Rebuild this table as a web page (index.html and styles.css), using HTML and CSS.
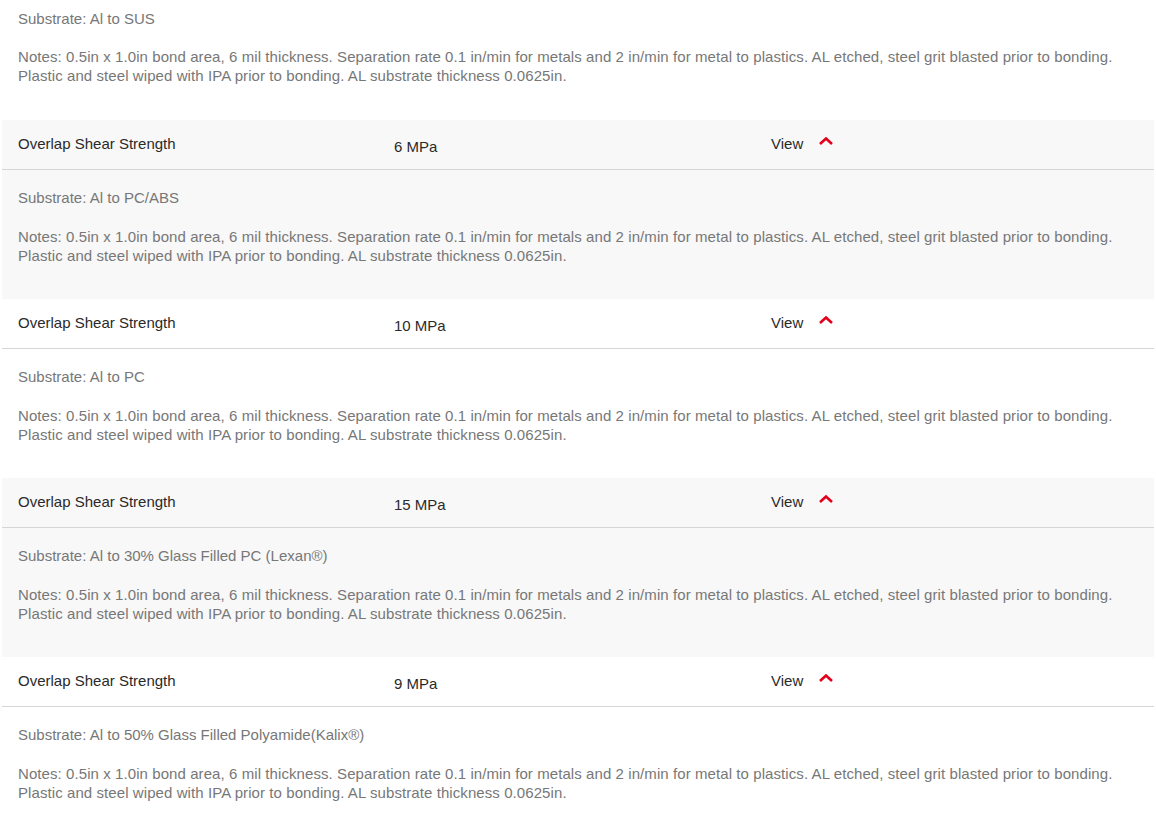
FILE: index.html
```html
<!DOCTYPE html>
<html>
<head>
<meta charset="utf-8">
<link rel="stylesheet" href="styles.css">
</head>
<body>
<div class="list">
  <section class="block">
    <div class="detail detail--cut">
      <p class="sub">Substrate: Al to SUS</p>
      <p class="notes">Notes: 0.5in x 1.0in bond area, 6 mil thickness. Separation rate 0.1 in/min for metals and 2 in/min for metal to plastics. AL etched, steel grit blasted prior to bonding. Plastic and steel wiped with IPA prior to bonding. AL substrate thickness 0.0625in.</p>
    </div>
  </section>
  <section class="block block--grey">
    <div class="row">
      <span class="label">Overlap Shear Strength</span>
      <span class="value">6 MPa</span>
      <span class="view">View <svg class="chev" width="14" height="8" viewBox="0 0 14 8"><polyline points="1,7 7,1.5 13,7" fill="none" stroke="#e2001a" stroke-width="2.6"/></svg></span>
    </div>
    <div class="detail">
      <p class="sub">Substrate: Al to PC/ABS</p>
      <p class="notes">Notes: 0.5in x 1.0in bond area, 6 mil thickness. Separation rate 0.1 in/min for metals and 2 in/min for metal to plastics. AL etched, steel grit blasted prior to bonding. Plastic and steel wiped with IPA prior to bonding. AL substrate thickness 0.0625in.</p>
    </div>
  </section>
  <section class="block">
    <div class="row">
      <span class="label">Overlap Shear Strength</span>
      <span class="value">10 MPa</span>
      <span class="view">View <svg class="chev" width="14" height="8" viewBox="0 0 14 8"><polyline points="1,7 7,1.5 13,7" fill="none" stroke="#e2001a" stroke-width="2.6"/></svg></span>
    </div>
    <div class="detail">
      <p class="sub">Substrate: Al to PC</p>
      <p class="notes">Notes: 0.5in x 1.0in bond area, 6 mil thickness. Separation rate 0.1 in/min for metals and 2 in/min for metal to plastics. AL etched, steel grit blasted prior to bonding. Plastic and steel wiped with IPA prior to bonding. AL substrate thickness 0.0625in.</p>
    </div>
  </section>
  <section class="block block--grey">
    <div class="row">
      <span class="label">Overlap Shear Strength</span>
      <span class="value">15 MPa</span>
      <span class="view">View <svg class="chev" width="14" height="8" viewBox="0 0 14 8"><polyline points="1,7 7,1.5 13,7" fill="none" stroke="#e2001a" stroke-width="2.6"/></svg></span>
    </div>
    <div class="detail">
      <p class="sub">Substrate: Al to 30% Glass Filled PC (Lexan®)</p>
      <p class="notes">Notes: 0.5in x 1.0in bond area, 6 mil thickness. Separation rate 0.1 in/min for metals and 2 in/min for metal to plastics. AL etched, steel grit blasted prior to bonding. Plastic and steel wiped with IPA prior to bonding. AL substrate thickness 0.0625in.</p>
    </div>
  </section>
  <section class="block">
    <div class="row">
      <span class="label">Overlap Shear Strength</span>
      <span class="value">9 MPa</span>
      <span class="view">View <svg class="chev" width="14" height="8" viewBox="0 0 14 8"><polyline points="1,7 7,1.5 13,7" fill="none" stroke="#e2001a" stroke-width="2.6"/></svg></span>
    </div>
    <div class="detail">
      <p class="sub">Substrate: Al to 50% Glass Filled Polyamide(Kalix®)</p>
      <p class="notes">Notes: 0.5in x 1.0in bond area, 6 mil thickness. Separation rate 0.1 in/min for metals and 2 in/min for metal to plastics. AL etched, steel grit blasted prior to bonding. Plastic and steel wiped with IPA prior to bonding. AL substrate thickness 0.0625in.</p>
    </div>
  </section>
</div>
</body>
</html>
```
FILE: styles.css
```css
html, body {
  margin: 0;
  padding: 0;
  background: #fff;
}
body {
  font-family: "Liberation Sans", Arial, sans-serif;
  font-size: 15px;
  color: #222;
}
.list {
  margin: 0 2px;
}
.block {
  background: #fff;
}
.block--grey {
  background: #f8f8f8;
}
.row {
  display: grid;
  grid-template-columns: 376px 377px auto;
  align-items: center;
  height: 49px;
  padding: 0 16px;
  border-bottom: 1px solid #d6d6d6;
}
.label {
  color: #2a2a2a;
  position: relative;
  top: -1px;
}
.value {
  color: #2a2a2a;
  position: relative;
  top: 2px;
}
.view {
  display: flex;
  align-items: center;
  gap: 16px;
  color: #2a2a2a;
  position: relative;
  top: -1px;
}
.chev {
  display: block;
  position: relative;
  top: -3px;
}
.detail {
  padding: 18px 16px 34px;
  height: 129px;
  box-sizing: border-box;
  color: #777;
}
.detail--cut {
  padding-top: 9px;
  height: 120px;
}
.sub, .notes {
  margin: 0;
  line-height: 19px;
}
.notes {
  letter-spacing: 0.08px;
}
.sub {
  margin-bottom: 20px;
}
.detail--cut .sub {
  margin-bottom: 19px;
}
```
